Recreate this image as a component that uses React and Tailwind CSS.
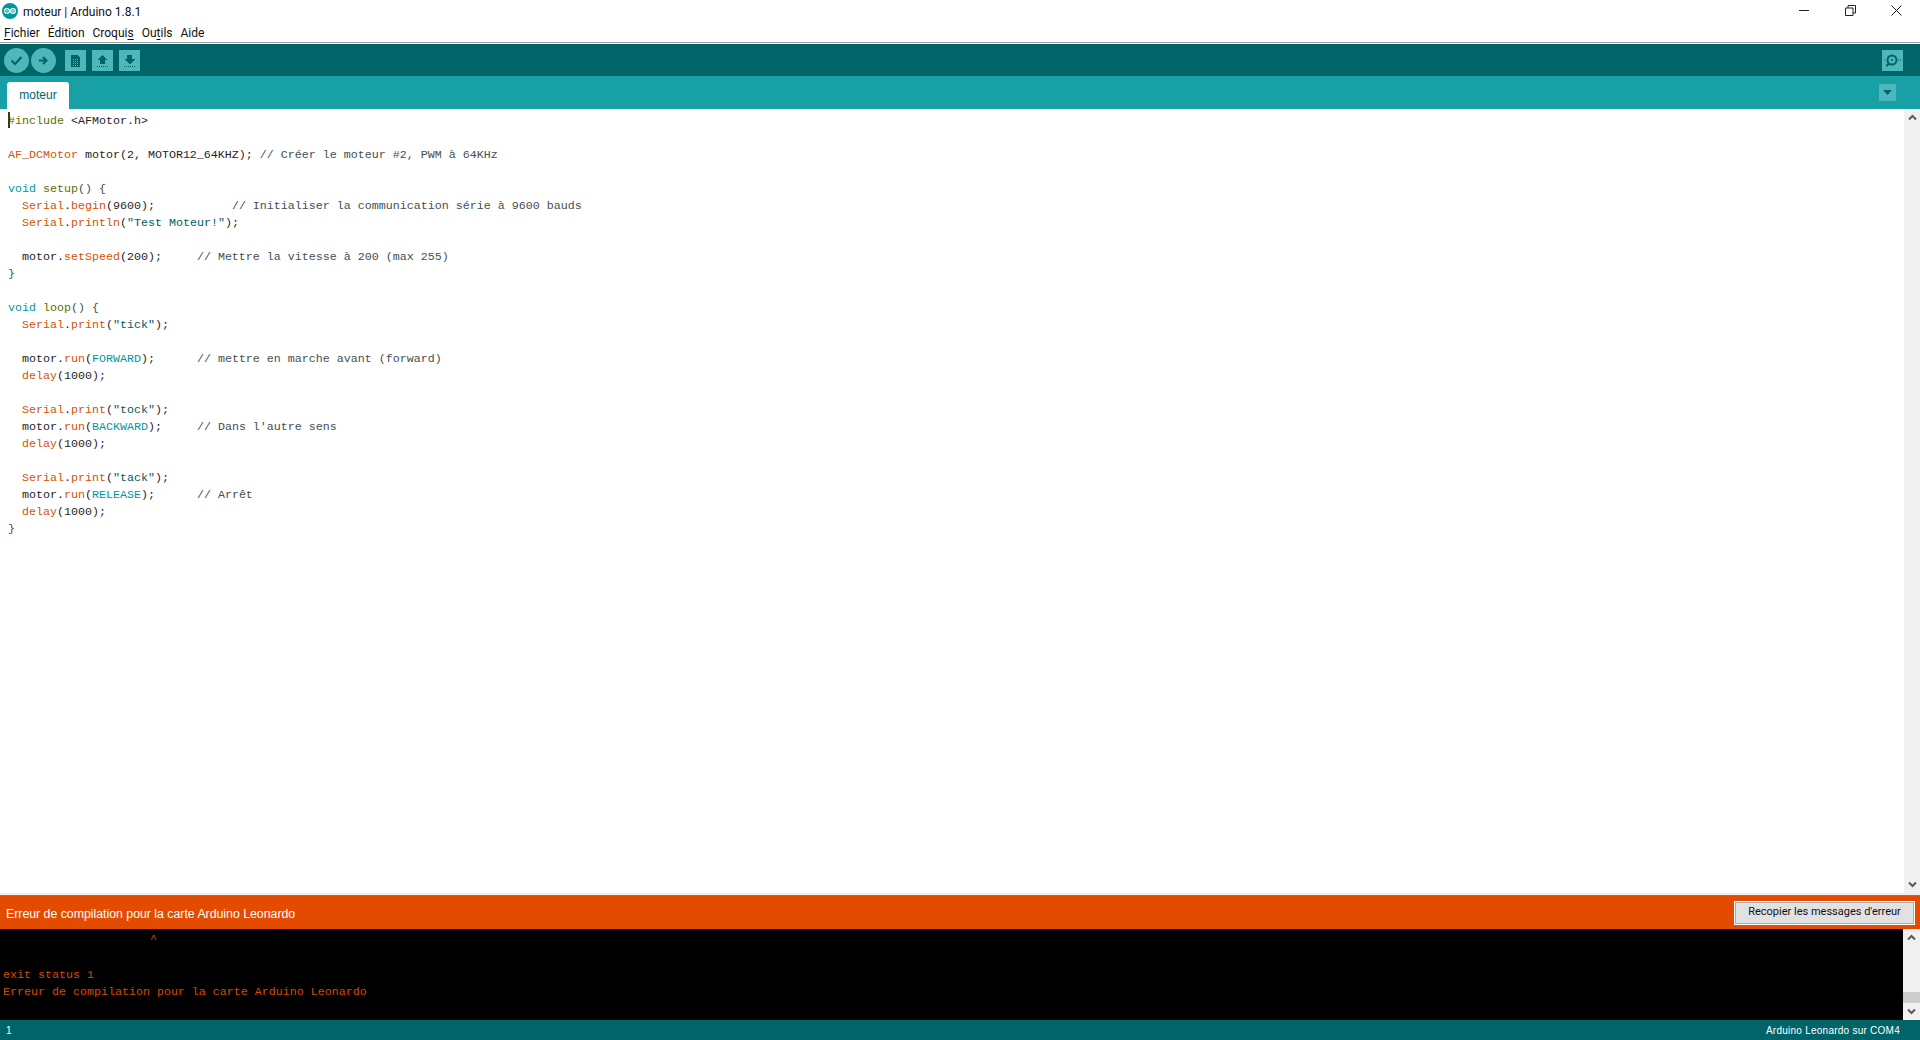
const K = {
  c: "text-[#434f54]",
  o: "text-[#d35400]",
  t: "text-[#00979c]",
  g: "text-[#5e6d03]",
  s: "text-[#005c5f]",
  b: "text-[#1f1f1f]",
};

const code = [
  [["g", "#include"], ["b", " <AFMotor.h>"]],
  [],
  [["o", "AF_DCMotor"], ["b", " motor(2, MOTOR12_64KHZ);"], ["c", " // Créer le moteur #2, PWM à 64KHz"]],
  [],
  [["t", "void"], ["b", " "], ["g", "setup"], ["c", "() {"]],
  [["b", "  "], ["o", "Serial"], ["b", "."], ["o", "begin"], ["b", "(9600);"], ["c", "           // Initialiser la communication série à 9600 bauds"]],
  [["b", "  "], ["o", "Serial"], ["b", "."], ["o", "println"], ["b", "("], ["s", "\"Test Moteur!\""], ["b", ");"]],
  [],
  [["b", "  motor."], ["o", "setSpeed"], ["b", "(200);"], ["c", "     // Mettre la vitesse à 200 (max 255)"]],
  [["c", "}"]],
  [],
  [["t", "void"], ["b", " "], ["g", "loop"], ["c", "() {"]],
  [["b", "  "], ["o", "Serial"], ["b", "."], ["o", "print"], ["b", "("], ["s", "\"tick\""], ["b", ");"]],
  [],
  [["b", "  motor."], ["o", "run"], ["b", "("], ["t", "FORWARD"], ["b", ");"], ["c", "      // mettre en marche avant (forward)"]],
  [["b", "  "], ["o", "delay"], ["b", "(1000);"]],
  [],
  [["b", "  "], ["o", "Serial"], ["b", "."], ["o", "print"], ["b", "("], ["s", "\"tock\""], ["b", ");"]],
  [["b", "  motor."], ["o", "run"], ["b", "("], ["t", "BACKWARD"], ["b", ");"], ["c", "     // Dans l'autre sens"]],
  [["b", "  "], ["o", "delay"], ["b", "(1000);"]],
  [],
  [["b", "  "], ["o", "Serial"], ["b", "."], ["o", "print"], ["b", "("], ["s", "\"tack\""], ["b", ");"]],
  [["b", "  motor."], ["o", "run"], ["b", "("], ["t", "RELEASE"], ["b", ");"], ["c", "      // Arrêt"]],
  [["b", "  "], ["o", "delay"], ["b", "(1000);"]],
  [["c", "}"]],
];

function Logo() {
  return (
    <svg width="16" height="16" viewBox="0 0 16 16">
      <circle cx="8" cy="8" r="8" fill="#00979c" />
      <circle cx="5" cy="8" r="2.4" fill="none" stroke="#fff" strokeWidth="1.2" />
      <circle cx="11" cy="8" r="2.4" fill="none" stroke="#fff" strokeWidth="1.2" />
      <path d="M4 8h2M10 8h2M11 7v2" stroke="#fff" strokeWidth="0.8" />
    </svg>
  );
}

function RoundBtn({ children }) {
  return (
    <div className="flex h-[25px] w-[25px] items-center justify-center rounded-full bg-[#4db7bb]">
      <svg width="13" height="13" viewBox="0 0 13 13">{children}</svg>
    </div>
  );
}

function SquareBtn({ children, cls = "" }) {
  return (
    <div className={`flex h-[21px] w-[21px] items-center justify-center bg-[#4db7bb] ${cls}`}>
      <svg width="15" height="15" viewBox="0 0 15 15" shapeRendering="crispEdges">{children}</svg>
    </div>
  );
}

function Chevron({ up }) {
  return (
    <div className="flex h-[17px] w-4 items-center justify-center">
      <svg width="9" height="7" viewBox="0 0 9 7">
        <path d={up ? "M1 5.5 4.5 2 8 5.5" : "M1 1.5 4.5 5 8 1.5"} fill="none" stroke="#5a5a5a" strokeWidth="2" />
      </svg>
    </div>
  );
}

function Menu({ pre, u, post }) {
  return (
    <span>
      {pre}
      <span className="underline underline-offset-2">{u}</span>
      {post}
    </span>
  );
}

export default function App() {
  return (
    <div className="flex h-[1040px] w-[1920px] flex-col overflow-hidden bg-white font-['Roboto','Open_Sans',sans-serif] text-[12px] text-black">
      <div className="flex h-[22px] shrink-0 items-start justify-between">
        <div className="flex items-start gap-[5px] pl-[2px] pt-[3px]">
          <Logo />
          <span className="pt-[1px] leading-4 text-[#111]">moteur | Arduino 1.8.1</span>
        </div>
        <div className="mr-[1px] flex items-center">
          <div className="flex h-[20px] w-[46px] items-center justify-center">
            <svg width="10" height="10" viewBox="0 0 10 10"><path d="M0 5.5h10" stroke="#222" /></svg>
          </div>
          <div className="flex h-[20px] w-[46px] items-center justify-center">
            <svg width="11" height="11" viewBox="0 0 11 11"><path d="M.5 3h7.5v7.5H.5zM3 3V.5h7.5V8H8" fill="none" stroke="#222" /></svg>
          </div>
          <div className="flex h-[20px] w-[46px] items-center justify-center">
            <svg width="11" height="11" viewBox="0 0 11 11"><path d="M.5.5l10 10M10.5.5l-10 10" stroke="#222" /></svg>
          </div>
        </div>
      </div>
      <div className="flex h-[20px] shrink-0 items-center gap-[8px] pl-[4px] pt-[2px] leading-4 text-[#111]">
        <Menu u="F" post="ichier" />
        <span>Édition</span>
        <Menu pre="Croqui" u="s" />
        <Menu pre="Ou" u="t" post="ils" />
        <span>Aide</span>
      </div>
      <div className="h-[1px] shrink-0 bg-[#a0a0a0]" />
      <div className="h-[1px] shrink-0 bg-white" />

      <div className="flex h-[32px] shrink-0 items-center justify-between bg-[#006468] pl-[4px] pr-[4px]">
        <div className="flex items-center">
          <RoundBtn>
            <path d="M1.5 6.5 5 10l6.5-7" fill="none" stroke="#006468" strokeWidth="2" />
          </RoundBtn>
          <div className="ml-[2px]">
            <RoundBtn>
              <path d="M2 6.5h6M6 3l3.5 3.5L6 10" fill="none" stroke="#006468" strokeWidth="2" />
            </RoundBtn>
          </div>
          <SquareBtn cls="ml-[9px]">
            <path d="M3 1.5h6l3 3V14H3z" fill="#006468" />
            <path d="M5 6h1M7 6h1M9 6h1M5 8h1M7 8h1M9 8h1M5 10h1M7 10h1M9 10h1M5 12h1M7 12h1M9 12h1" stroke="#4db7bb" />
          </SquareBtn>
          <SquareBtn cls="ml-[6px]">
            <path d="M7.5 2 13 7H10v4H5V7H2z" fill="#006468" />
            <path d="M2 13.5h11" stroke="#006468" strokeDasharray="1 1" />
          </SquareBtn>
          <SquareBtn cls="ml-[6px]">
            <path d="M5 1.5h5V6h3L7.5 11.5 2 6h3z" fill="#006468" />
            <path d="M2 13.5h11" stroke="#006468" strokeDasharray="1 1" />
          </SquareBtn>
        </div>
        <div className="mr-[13px] flex h-[21px] w-[21px] items-center justify-center bg-[#4db7bb]">
          <svg width="17" height="17" viewBox="0 0 17 17">
            <circle cx="8" cy="8" r="4.5" fill="none" stroke="#006468" strokeWidth="2" />
            <circle cx="8" cy="8" r="1" fill="#006468" />
            <path d="M5 11.5 2.5 14" stroke="#006468" strokeWidth="2.4" />
            <path d="M14 8h1M16 8h1M0 8h1" stroke="#006468" />
          </svg>
        </div>
      </div>

      <div className="flex h-[33px] shrink-0 items-end justify-between bg-[#17a1a5]">
        <div className="ml-[7px] flex h-[27px] w-[62px] items-center justify-center rounded-t-[3px] bg-white pb-[1px] font-['Liberation_Sans',sans-serif] text-[12px] text-[#006468]">
          moteur
        </div>
        <div className="mb-[8px] mr-[24px] flex h-[17px] w-[17px] items-center justify-center bg-[#4db7bb]">
          <svg width="9" height="5" viewBox="0 0 9 5"><path d="M0 0h9L4.5 5z" fill="#006468" /></svg>
        </div>
      </div>

      <div className="flex min-h-0 flex-1">
        <div className="relative min-w-0 flex-1 overflow-hidden pl-[8px] pt-[4px] font-['Liberation_Mono',monospace] text-[11.67px] leading-[17px]">
          <div className="absolute left-[8px] top-[3px] h-[16px] w-[2px] bg-[#3f3a00]" />
          {code.map((line, i) => (
            <div key={i} className="h-[17px] whitespace-pre">
              {line.map(([k, text], j) => (
                <span key={j} className={K[k]}>{text}</span>
              ))}
            </div>
          ))}
        </div>
        <div className="flex w-4 shrink-0 flex-col justify-between bg-[#f0f0f0]">
          <Chevron up />
          <Chevron />
        </div>
      </div>
      <div className="h-[2px] shrink-0 bg-[#eeeeee]" />

      <div className="flex h-[34px] shrink-0 items-center justify-between border-t border-[#b06a3c] bg-[#e34c00] pl-[6px] pr-[5px]">
        <span className="pt-[4px] font-['Liberation_Sans',sans-serif] text-[12.3px] text-white">Erreur de compilation pour la carte Arduino Leonardo</span>
        <div className="flex h-[24px] w-[181px] items-center justify-center border border-white bg-[#e1e1e1] font-['Roboto',sans-serif] text-[11px] text-[#111] outline outline-1 -outline-offset-2 outline-[#adadad]">
          Recopier les messages d'erreur
        </div>
      </div>

      <div className="flex h-[91px] shrink-0 bg-black">
        <div className="min-w-0 flex-1 overflow-hidden whitespace-pre pl-[3px] pt-[4px] font-['Liberation_Mono',monospace] text-[11.67px] leading-[17px] text-[#d94800]">
          <div className="h-[17px] -translate-y-[2px]">{"                     ^"}</div>
          <div className="h-[17px]" />
          <div className="h-[17px]">exit status 1</div>
          <div className="h-[17px]">Erreur de compilation pour la carte Arduino Leonardo</div>
        </div>
        <div className="flex w-[17px] shrink-0 flex-col justify-between bg-[#f0f0f0]">
          <Chevron up />
          <div className="flex flex-col">
            <div className="h-[11px] bg-[#cdcdcd]" />
            <Chevron />
          </div>
        </div>
      </div>

      <div className="flex h-[20px] shrink-0 items-center justify-between bg-[#006468] pl-[6px] pr-[20px] font-['Liberation_Sans',sans-serif] text-[10px] tracking-[0.25px] text-white">
        <span>1</span>
        <span>Arduino Leonardo sur COM4</span>
      </div>
    </div>
  );
}
